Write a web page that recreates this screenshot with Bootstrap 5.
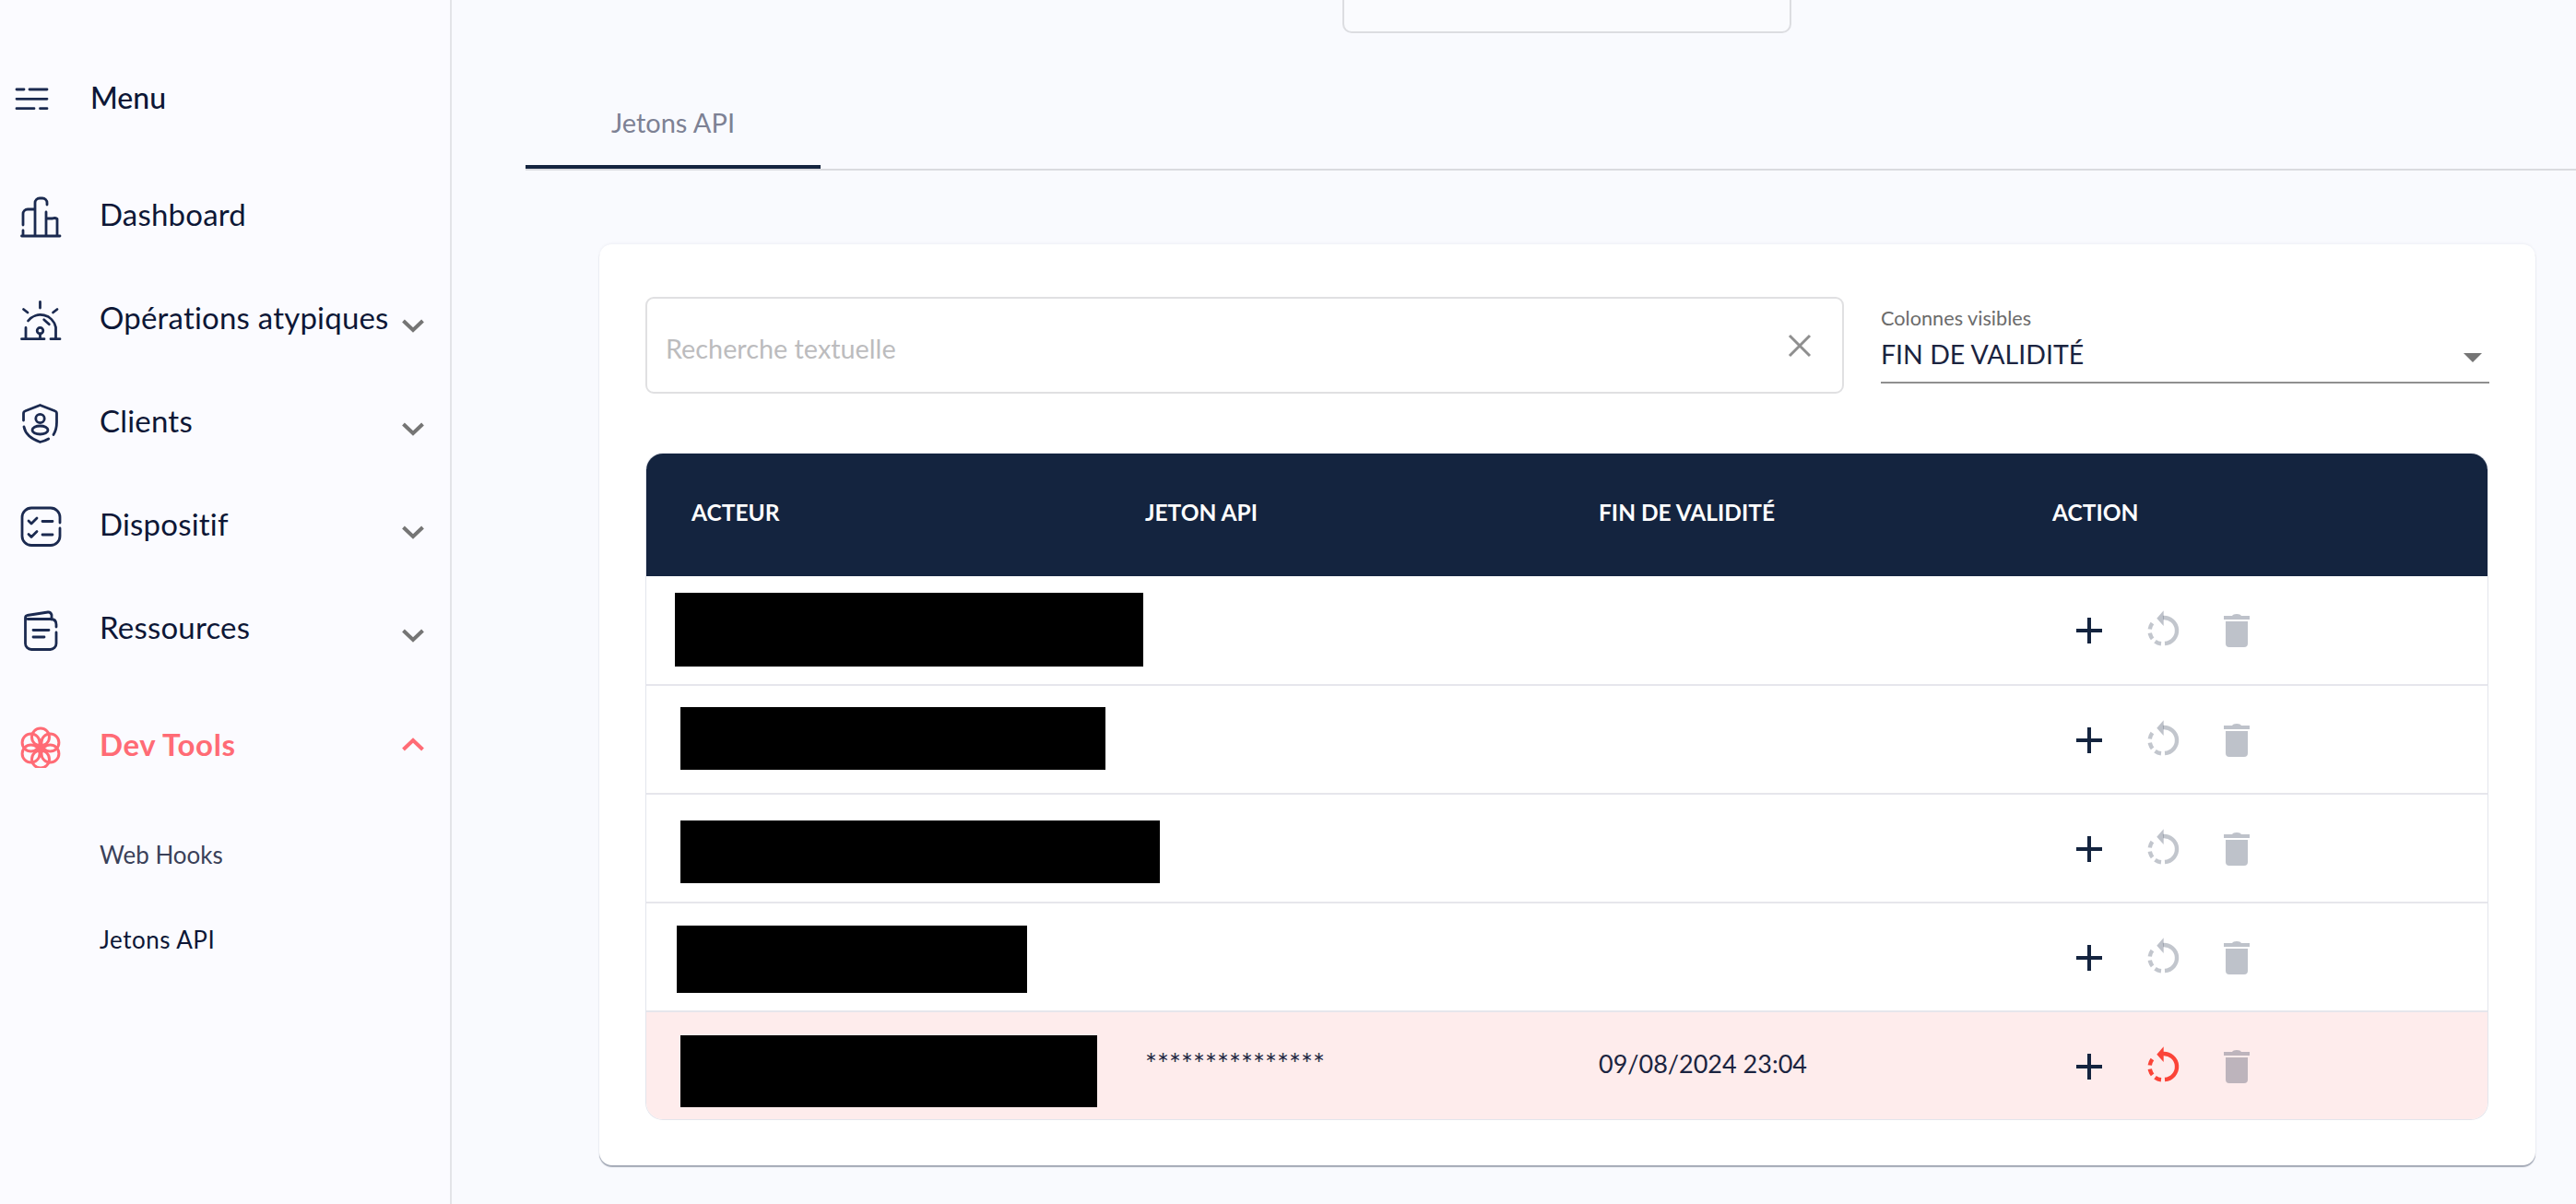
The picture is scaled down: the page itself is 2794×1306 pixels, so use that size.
<!DOCTYPE html>
<html lang="fr">
<head>
<meta charset="utf-8">
<title>Jetons API</title>
<link href="https://cdn.jsdelivr.net/npm/bootstrap@5.3.0/dist/css/bootstrap.min.css" rel="stylesheet">
<style>
html,body{height:1306px;overflow:hidden}
body{background:#f9fafe;font-family:"Lato","Liberation Sans",sans-serif;color:#0d1736}
.shell{height:1306px}
.side{width:490px;flex:0 0 490px;border-right:2px solid #e3e4e8;background:#fbfbff;padding-top:52px}
.menu-row{height:110px;margin-bottom:18px;font-size:32px;font-weight:500;gap:38px;padding-left:10px}
.menu-row span{margin-top:-3px}
.side-row{height:112px;padding-left:19px;padding-right:29px;font-size:33px;color:#0d1736;text-decoration:none;letter-spacing:.2px}
.side-row .lab{margin-left:39px;margin-top:-6px}
.side-row .chev{margin-left:auto;margin-right:-4px}
.ico{stroke:#1b2a50;stroke-width:2.8;fill:none;stroke-linecap:round;stroke-linejoin:round}
.chev-ln{stroke:#757575;stroke-width:4;fill:none}
.dev{margin-top:12px;color:#ff6b75;font-weight:700;letter-spacing:.6px}
.dev .lab{margin-top:-1px}
.dev .ico{stroke:#ff6b75;stroke-width:3}
.dev .chev-ln{stroke:#ff6b75}
.sub{height:92px;padding-left:108px;font-size:26px;text-decoration:none;color:#3a4159}
.sub-first{margin-top:17px}
.sub-on{color:#0d1736;letter-spacing:.5px}
.mainpane{min-width:0}
.stub{width:487px;height:36px;margin-left:966px;border:2px solid #dcdde1;border-top:0;border-radius:0 0 10px 10px;background:#fafbfe}
.tabbar{margin:44px 0 0 80px;border-bottom:2px solid #dadbdf}
.tabbar .nav-link.tablink{width:320px;height:103px;border:0;border-bottom:4px solid #14243f;border-radius:0;color:#7d8194;background:transparent;font-size:29px;text-align:center;padding:31px 0 0;margin:0}
.sheet{margin:80px 44px 0 160px;height:999px;border:0;border-radius:14px;padding:57px 50px 50px 50px;background:#fff;box-shadow:0 2px 1px rgba(60,72,96,.45),0 -1px 3px rgba(60,72,96,.06)}
.searchbox{height:105px;flex:0 0 1300px;border:2px solid #e0e0e2;border-radius:9px;padding:0 33px 0 20px}
.searchbox input{border:0;outline:0;box-shadow:none;padding:8px 0 0;font-size:28.8px;background:transparent;color:#333}
.searchbox input::placeholder{color:#bcbcbe;opacity:1}
.colsel{flex:1;margin-left:40px;height:94px;border-bottom:2px solid #8f8f8f;position:relative;padding-top:10px}
.colsel .cap{font-size:21.700px;line-height:26px;color:#6b6b6b}
.colsel .val{font-size:28.500px;line-height:38px;margin-top:7px;color:#1b2440}
.colsel svg{position:absolute;right:8px;top:61px}
.tblwrap{margin:65px 0 0 1px;width:1997px;border-radius:18px;overflow:hidden;box-shadow:0 0 0 1px #e3e5ec}
.tokens{table-layout:fixed;width:1997px;--bs-table-bg:transparent;margin:0}
.tokens th{background:#14243f;color:#fff;font-size:24.500px;font-weight:700;height:133px;vertical-align:middle;padding:0 0 5px 49px;border:0}
.tokens td{height:118px;vertical-align:middle;padding:0 0 0 49px;border-bottom:2px solid #e6e6ec;color:#1b2440;font-size:27px;background:#fff;position:relative}
.tokens tr:last-child td{border-bottom:0;height:117px;background:#feecec;padding-bottom:4px}
.stars{font-size:30.600px}
.c1{width:492px}.c4{width:521px}
.hidebox{position:absolute;background:#000;z-index:1}
.h1x{left:31px;top:18px;width:508px;height:80px}
.h2x{left:37px;top:23px;width:461px;height:68px}
.h3x{left:37px;top:28px;width:520px;height:68px}
.h4x{left:33px;top:24px;width:380px;height:73px}
.h5x{left:37px;top:25px;width:452px;height:78px}
.acts{gap:36px;margin-left:18px;padding-top:1px}
.tokens tr:last-child .acts{margin-top:4px}
.act-faint{fill:#14243f;fill-opacity:.28;stroke:none}
.act-faint-l{stroke:#14243f;stroke-opacity:.26;fill:none;stroke-width:4.4}
.act-red{fill:#fb4438;stroke:none}
.act-red-l{stroke:#fb4438;fill:none;stroke-width:4.4}
</style>
</head>
<body>
<svg width="0" height="0" class="d-none">
<symbol id="s-plus" viewBox="0 0 44 44"><path d="M20 8h4v12h12v4H24v12h-4V24H8v-4h12z" fill="#14243f"/></symbol>
<symbol id="s-reset" viewBox="0 0 44 44"><path class="act-faint-l" d="M22 8A14 14 0 1 1 24 36"/><path class="act-faint-l" stroke-dasharray="7 4" d="M20 36.2A14 14 0 0 1 13 11.3"/><path class="act-faint" d="M22.7 .3 15.3 8.7 22.7 17z"/></symbol>
<symbol id="s-reset-red" viewBox="0 0 44 44"><path class="act-red-l" d="M22 8A14 14 0 1 1 24 36"/><path class="act-red-l" stroke-dasharray="7 4" d="M20 36.2A14 14 0 0 1 13 11.3"/><path class="act-red" d="M22.7 .3 15.3 8.7 22.7 17z"/></symbol>
<symbol id="s-trash" viewBox="0 0 44 44"><path class="act-faint" d="M8 6h9q1-2 5-2t5 2h9v4H8zM10 12h24v24q0 4-4 4H14q-4 0-4-4z"/></symbol>
</svg>
<div class="shell d-flex">
<aside class="side d-flex flex-column">
  <div class="menu-row d-flex align-items-center">
    <svg width="50" height="50" viewBox="10 22 50 50" class="ico"><path d="M18 37H26M32 37H51M18 47.3H51M18 57.7H37M43.500 57.700H51"/></svg>
    <span>Menu</span>
  </div>
  <nav class="nav flex-column flex-nowrap">
    <a class="side-row d-flex align-items-center" href="#">
      <svg width="50" height="50" viewBox="19 11 50 50" class="ico"><path d="M23.500 56H65M25 44V32a5 5 0 0 1 5-5h8M38 56V20a5 5 0 0 1 5-5h3a5 5 0 0 1 5 5v2M50 30V56M50 37h7a5 5 0 0 1 5 .5V56M25 50v6"/></svg>
      <span class="lab">Dashboard</span>
    </a>
    <a class="side-row d-flex align-items-center" href="#">
      <svg width="50" height="50" viewBox="19 23 50 50" class="ico"><path d="M23.500 67.700H48M55 67.700H65M28 55.500V67.700M30.500 48A17 17 0 0 1 60.500 55V67.700M43.500 62V67.700M47.700 46.700 53.300 51.700M43.500 27.500V34M25.500 35.500 30 39M62 35.500 57.500 39"/><circle cx="43.500" cy="58.700" r="3.300"/></svg>
      <span class="lab">Opérations atypiques</span>
      <svg class="chev" width="30" height="30" viewBox="0 0 30 30"><path class="chev-ln" d="M4.500 15 15 25 25.500 15"/></svg>
    </a>
    <a class="side-row d-flex align-items-center" href="#">
      <svg width="50" height="50" viewBox="19 25 50 50" class="ico"><path d="M25.500 46V38.500q0-2 2-2.700L43.500 29.500l16 6.300q2 .7 2 2.700V48q0 8-3.500 13.500M26 53q2 11 17.500 16.500q5-1 9.200-3.500"/><circle cx="43.500" cy="44" r="4.700"/><ellipse cx="43.500" cy="56.500" rx="8.500" ry="4.500"/></svg>
      <span class="lab">Clients</span>
      <svg class="chev" width="30" height="30" viewBox="0 0 30 30"><path class="chev-ln" d="M4.500 15 15 25 25.500 15"/></svg>
    </a>
    <a class="side-row d-flex align-items-center" href="#">
      <svg width="50" height="50" viewBox="19 27 50 50" class="ico"><path d="M65 47V41a10 10 0 0 0-10-10H34a10 10 0 0 0-10 10V61.500a10 10 0 0 0 10 10H55a10 10 0 0 0 10-10V53M31 45l3 3 6-6M31 59.500l3 3 6-6M46 45.500H57M46 60H57"/></svg>
      <span class="lab">Dispositif</span>
      <svg class="chev" width="30" height="30" viewBox="0 0 30 30"><path class="chev-ln" d="M4.500 15 15 25 25.500 15"/></svg>
    </a>
    <a class="side-row d-flex align-items-center" href="#">
      <svg width="50" height="50" viewBox="19 19 50 50" class="ico"><path d="M61 46V58a6.500 6.500 0 0 1-6.500 6.500H34a6.500 6.500 0 0 1-6.500-6.500V30q0-2 2-2.500L52 24q3-.3 4 3V32M30 31.500H55q6 0 6 6V40M36 43.500H53M36 51H48"/></svg>
      <span class="lab">Ressources</span>
      <svg class="chev" width="30" height="30" viewBox="0 0 30 30"><path class="chev-ln" d="M4.500 15 15 25 25.500 15"/></svg>
    </a>
    <a class="side-row dev d-flex align-items-center" href="#">
      <svg width="50" height="50" viewBox="19 143 50 50" class="ico"><circle cx="44" cy="159.500" r="9.500"/><circle cx="44" cy="183.500" r="9.500"/><circle cx="33.600" cy="165.500" r="9.500"/><circle cx="54.400" cy="165.500" r="9.500"/><circle cx="33.600" cy="177.500" r="9.500"/><circle cx="54.400" cy="177.500" r="9.500"/><path d="M44 171V178M39 167.500 44 171 49 167.500"/></svg>
      <span class="lab">Dev Tools</span>
      <svg class="chev" width="30" height="30" viewBox="0 0 30 30"><path class="chev-ln" d="M4.500 20 15 10 25.500 20"/></svg>
    </a>
    <a class="sub sub-first d-flex align-items-center" href="#">Web Hooks</a>
    <a class="sub sub-on d-flex align-items-center" href="#">Jetons API</a>
  </nav>
</aside>
<main class="mainpane flex-grow-1">
  <div class="stub"></div>
  <ul class="nav nav-tabs tabbar">
    <li class="nav-item"><a class="nav-link tablink active" href="#">Jetons API</a></li>
  </ul>
  <section class="card sheet">
    <div class="d-flex align-items-start">
      <div class="searchbox d-flex align-items-center">
        <input class="form-control" type="text" placeholder="Recherche textuelle">
        <svg width="26" height="26" viewBox="0 0 26 26" class="ms-3 flex-shrink-0"><path d="M2 2 24 24M24 2 2 24" stroke="#8f8f8f" stroke-width="3" fill="none"/></svg>
      </div>
      <div class="colsel">
        <div class="cap">Colonnes visibles</div>
        <div class="val">FIN DE VALIDITÉ</div>
        <svg width="20" height="10" viewBox="0 0 20 10"><path d="M0 0H20L10 10z" fill="#757575"/></svg>
      </div>
    </div>
    <div class="tblwrap">
      <table class="table tokens">
        <thead><tr><th class="c1">ACTEUR</th><th class="c1">JETON API</th><th class="c1">FIN DE VALIDITÉ</th><th class="c4">ACTION</th></tr></thead>
        <tbody>
          <tr><td><div class="hidebox h1x"></div></td><td></td><td></td><td><div class="acts d-flex"><svg width="44" height="44"><use href="#s-plus"/></svg><svg width="44" height="44"><use href="#s-reset"/></svg><svg width="44" height="44"><use href="#s-trash"/></svg></div></td></tr>
          <tr><td><div class="hidebox h2x"></div></td><td></td><td></td><td><div class="acts d-flex"><svg width="44" height="44"><use href="#s-plus"/></svg><svg width="44" height="44"><use href="#s-reset"/></svg><svg width="44" height="44"><use href="#s-trash"/></svg></div></td></tr>
          <tr><td><div class="hidebox h3x"></div></td><td></td><td></td><td><div class="acts d-flex"><svg width="44" height="44"><use href="#s-plus"/></svg><svg width="44" height="44"><use href="#s-reset"/></svg><svg width="44" height="44"><use href="#s-trash"/></svg></div></td></tr>
          <tr><td><div class="hidebox h4x"></div></td><td></td><td></td><td><div class="acts d-flex"><svg width="44" height="44"><use href="#s-plus"/></svg><svg width="44" height="44"><use href="#s-reset"/></svg><svg width="44" height="44"><use href="#s-trash"/></svg></div></td></tr>
          <tr><td><div class="hidebox h5x"></div></td><td><span class="stars">***************</span></td><td>09/08/2024 23:04</td><td><div class="acts d-flex"><svg width="44" height="44"><use href="#s-plus"/></svg><svg width="44" height="44"><use href="#s-reset-red"/></svg><svg width="44" height="44"><use href="#s-trash"/></svg></div></td></tr>
        </tbody>
      </table>
    </div>
  </section>
</main>
</div>
<script src="https://cdn.jsdelivr.net/npm/bootstrap@5.3.0/dist/js/bootstrap.bundle.min.js"></script>
</body>
</html>
